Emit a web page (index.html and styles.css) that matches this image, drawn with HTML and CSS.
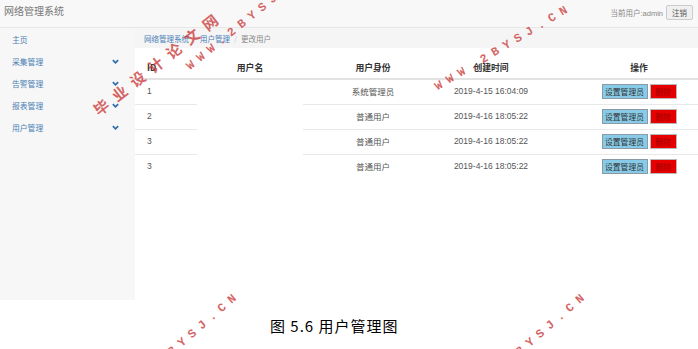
FILE: index.html
```html
<!DOCTYPE html>
<html lang="zh-CN">
<head>
  <meta charset="UTF-8" />
  <meta name="viewport" content="width=device-width, initial-scale=1.0" />
  <title>网络管理系统 - 用户管理</title>
  <link rel="stylesheet" href="styles.css">
</head>
<body>
  <div class="app">
    <!-- 顶部导航 -->
    <header class="topbar">
      <span class="brand">网络管理系统</span>
      <div class="user">
        <span>当前用户:admin</span>
        <button class="logout">注销</button>
      </div>
    </header>

    <div class="main">
      <nav class="sidebar">
        <a class="nav-item" href="#">主页</a>
        <a class="nav-item" href="#">采集管理 <svg class="chev" viewBox="0 0 8 5"><polyline points="1,1 4,4 7,1"/></svg></a>
        <a class="nav-item" href="#">告警管理 <svg class="chev" viewBox="0 0 8 5"><polyline points="1,1 4,4 7,1"/></svg></a>
        <a class="nav-item" href="#">报表管理 <svg class="chev" viewBox="0 0 8 5"><polyline points="1,1 4,4 7,1"/></svg></a>
        <a class="nav-item" href="#">用户管理 <svg class="chev" viewBox="0 0 8 5"><polyline points="1,1 4,4 7,1"/></svg></a>
      </nav>

      <section class="content">
        <div class="crumb">
          <a href="#">网络管理系统</a><span class="sep">/</span><a href="#">用户管理</a><span class="sep">/</span><span class="active">更改用户</span>
        </div>

        <table class="user-table">
          <colgroup>
            <col class="c-id"><col class="c-name"><col class="c-role"><col class="c-time"><col class="c-op">
          </colgroup>
          <thead>
            <tr><th class="id">ID</th><th>用户名</th><th>用户身份</th><th>创建时间</th><th class="op">操作</th></tr>
          </thead>
          <tbody>
            <tr>
              <td class="id">1</td><td class="name"></td><td>系统管理员</td><td>2019-4-15 16:04:09</td>
              <td class="op"><button class="btn-admin">设置管理员</button><button class="btn-del">删除</button></td>
            </tr>
            <tr>
              <td class="id">2</td><td class="name"></td><td>普通用户</td><td>2019-4-16 18:05:22</td>
              <td class="op"><button class="btn-admin">设置管理员</button><button class="btn-del">删除</button></td>
            </tr>
            <tr>
              <td class="id">3</td><td class="name"></td><td>普通用户</td><td>2019-4-16 18:05:22</td>
              <td class="op"><button class="btn-admin">设置管理员</button><button class="btn-del">删除</button></td>
            </tr>
            <tr>
              <td class="id">3</td><td class="name"></td><td>普通用户</td><td>2019-4-16 18:05:22</td>
              <td class="op"><button class="btn-admin">设置管理员</button><button class="btn-del">删除</button></td>
            </tr>
          </tbody>
        </table>
      </section>
    </div>
  </div>

  <p class="caption">图 5.6 用户管理图</p>

  <!-- 水印 -->
  <div class="marks">
    <span class="mark cn m1">毕业设计论文网</span>
    <span class="mark m2">WWW.2BYSJ.CN</span>
    <span class="mark m3">WWW.2BYSJ.CN</span>
    <span class="mark m4">WWW.2BYSJ.CN</span>
    <span class="mark m5">WWW.2BYSJ.CN</span>
  </div>
</body>
</html>
```

FILE: styles.css
```css
body {
  margin: 0;
  width: 698px;
  height: 349px;
  overflow: hidden;
  position: relative;
  background: #fff;
  font-family: "Liberation Sans", "Noto Sans CJK SC", sans-serif;
  color: #555;
}
.app {
  height: 300px;
  display: flex;
  flex-direction: column;
}
.topbar {
  height: 27px;
  flex: none;
  background: #f8f8f8;
  border-bottom: 1px solid #e7e7e7;
  display: flex;
  align-items: center;
  justify-content: space-between;
  padding: 0 5px 0 4px;
}
.brand {
  font-size: 10px;
  color: #777;
  font-family: "Noto Sans CJK SC", sans-serif;
  margin-top: -6px;
}
.user {
  display: flex;
  align-items: center;
  gap: 3px;
  font-size: 7.5px;
  color: #888;
  margin-top: -3px;
}
.logout {
  font-family: "Noto Sans CJK SC", sans-serif;
  font-size: 7.5px;
  color: #555;
  background: #f0f0f0;
  border: 1px solid #ccc;
  border-radius: 2px;
  padding: 0 5px;
  height: 15px;
}
.main {
  flex: 1;
  display: flex;
}
.sidebar {
  width: 135px;
  flex: none;
  background: #f7f7f7;
  display: flex;
  flex-direction: column;
}
.nav-item {
  height: 22px;
  display: flex;
  align-items: center;
  justify-content: space-between;
  padding: 0 16px 0 12px;
  font-size: 7.8px;
  color: #4a7fb5;
  text-decoration: none;
  font-family: "Noto Sans CJK SC", sans-serif;
}
.chev {
  width: 7px;
  height: 5px;
  fill: none;
  stroke: #2f6fae;
  stroke-width: 2;
}
.content {
  flex: 1;
  min-width: 0;
}
.crumb {
  height: 20px;
  background: #f5f5f5;
  display: flex;
  align-items: center;
  padding-left: 9px;
  font-size: 7.5px;
  font-family: "Noto Sans CJK SC", sans-serif;
}
.crumb a {
  color: #4a7fb5;
  text-decoration: none;
}
.crumb .sep {
  color: #ccc;
  padding: 0 4px;
}
.crumb .active {
  color: #888;
}

.user-table {
  width: 563px;
  margin-top: 8px;
  border-collapse: collapse;
  table-layout: fixed;
  font-size: 8.5px;
}
.c-id { width: 62px; }
.c-name { width: 106px; }
.c-role { width: 140px; }
.c-time { width: 96px; }
.c-op { width: 159px; }
.user-table th {
  height: 22px;
  padding: 0;
  font-family: "Noto Sans CJK SC", sans-serif;
  font-size: 8.8px;
  color: #333;
  font-weight: bold;
  text-align: center;
  border-bottom: 2px solid #e2e2e2;
}
.user-table td {
  height: 22px;
  padding: 0 0 2px;
  text-align: center;
  color: #555;
  border-bottom: 1px solid #e8e8e8;
}
.user-table tr:last-child td {
  border-bottom: none;
}
.user-table td:nth-child(3) {
  font-family: "Noto Sans CJK SC", sans-serif;
}
.user-table .id {
  text-align: left;
  padding-left: 12px;
}
.user-table td.name {
  border-bottom: none;
}
.user-table .op {
  padding-left: 41px;
}
.btn-admin,
.btn-del {
  height: 15px;
  padding: 0;
  font-family: "Noto Sans CJK SC", sans-serif;
  font-size: 7.8px;
  line-height: 13px;
  vertical-align: middle;
}
.btn-admin {
  width: 46px;
  background: #87cbe8;
  border: 1px solid #8c9aa6;
  color: #333;
}
.btn-del {
  width: 27px;
  margin-left: 2px;
  background: #e60000;
  border: 1px solid #b9b9b9;
  color: #a30000;
}

.caption {
  margin: 16px 0 0 270px;
  font-family: "Noto Sans CJK SC", sans-serif;
  font-size: 15px;
  line-height: 20px;
  letter-spacing: 1px;
  color: #000;
}

/* watermarks over the picture */
.marks {
  position: absolute;
  inset: 0;
  pointer-events: none;
  overflow: hidden;
}
.mark {
  position: absolute;
  white-space: nowrap;
  line-height: 1;
  transform-origin: 0 50%;
  font-family: "Liberation Mono", monospace;
  font-weight: bold;
  font-size: 12px;
  letter-spacing: 6px;
  color: rgba(200, 50, 50, 0.75);
}
.mark.cn {
  font-family: "Noto Sans CJK SC", sans-serif;
  font-size: 15px;
  letter-spacing: 8px;
}
.m1 { left: 95px; top: 104px; transform: rotate(-38deg); }
.m2 { left: 188px; top: 62px; transform: rotate(-39deg); }
.m3 { left: 436px; top: 82px; transform: rotate(-31deg); }
.m4 { left: 120px; top: 391px; transform: rotate(-41deg); }
.m5 { left: 468px; top: 391px; transform: rotate(-41deg); }
```
